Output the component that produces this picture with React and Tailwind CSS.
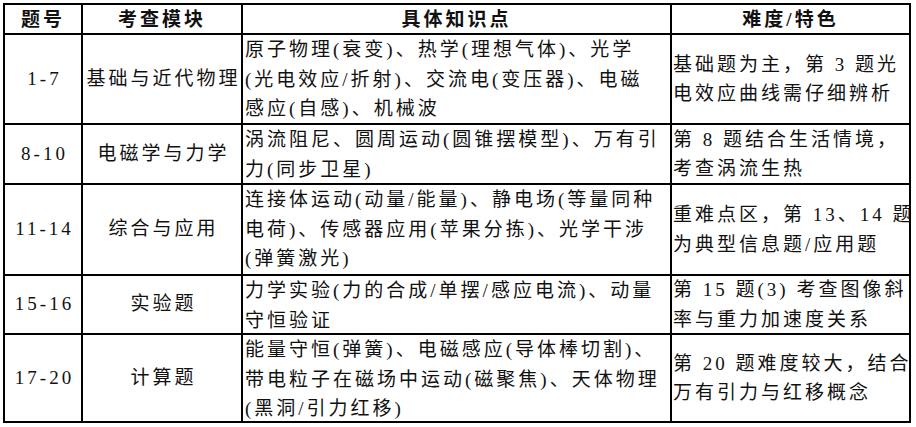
import React from "react";

const rows = [
  {
    no: "1-7",
    mod: "基础与近代物理",
    pts: [
      "原子物理(衰变)、热学(理想气体)、光学",
      "(光电效应/折射)、交流电(变压器)、电磁",
      "感应(自感)、机械波",
    ],
    feat: ["基础题为主，第 3 题光", "电效应曲线需仔细辨析"],
  },
  {
    no: "8-10",
    mod: "电磁学与力学",
    pts: ["涡流阻尼、圆周运动(圆锥摆模型)、万有引", "力(同步卫星)"],
    feat: ["第 8 题结合生活情境，", "考查涡流生热"],
  },
  {
    no: "11-14",
    mod: "综合与应用",
    pts: [
      "连接体运动(动量/能量)、静电场(等量同种",
      "电荷)、传感器应用(苹果分拣)、光学干涉",
      "(弹簧激光)",
    ],
    feat: ["重难点区，第 13、14 题", "为典型信息题/应用题"],
  },
  {
    no: "15-16",
    mod: "实验题",
    pts: ["力学实验(力的合成/单摆/感应电流)、动量", "守恒验证"],
    feat: ["第 15 题(3) 考查图像斜", "率与重力加速度关系"],
  },
  {
    no: "17-20",
    mod: "计算题",
    pts: [
      "能量守恒(弹簧)、电磁感应(导体棒切割)、",
      "带电粒子在磁场中运动(磁聚焦)、天体物理",
      "(黑洞/引力红移)",
    ],
    feat: ["第 20 题难度较大，结合", "万有引力与红移概念"],
  },
];

export default function App() {
  return (
    <div className="bg-white min-h-[427px] w-[916px] p-[3px] font-['Liberation_Serif','Noto_Sans_CJK_SC',serif] text-[19px] tracking-[3px] text-[#111]">
      <div className="grid w-fit gap-[2px] bg-black p-[2px] grid-cols-[76px_158px_427px_237px] grid-rows-[28px_88px_58px_89px_57px_86px]">
        <div className="bg-white flex items-center justify-center font-bold leading-none">题号</div>
        <div className="bg-white flex items-center justify-center font-bold leading-none">考查模块</div>
        <div className="bg-white flex items-center justify-center font-bold leading-none">具体知识点</div>
        <div className="bg-white flex items-center justify-center font-bold leading-none">难度/特色</div>
        {rows.map((r) => (
          <React.Fragment key={r.no}>
            <div className="bg-white flex items-center justify-center whitespace-nowrap pl-[3px]">{r.no}</div>
            <div className="bg-white flex items-center justify-center whitespace-nowrap pl-[3px]">{r.mod}</div>
            <div className="bg-white pl-[2px] leading-[29.5px] overflow-visible">
              {r.pts.map((l, i) => (
                <div key={i} className="whitespace-nowrap">{l}</div>
              ))}
            </div>
            <div className="bg-white flex flex-col justify-center pl-[1px] leading-[29.5px]">
              {r.feat.map((l, i) => (
                <div key={i} className="whitespace-nowrap">{l}</div>
              ))}
            </div>
          </React.Fragment>
        ))}
      </div>
    </div>
  );
}
